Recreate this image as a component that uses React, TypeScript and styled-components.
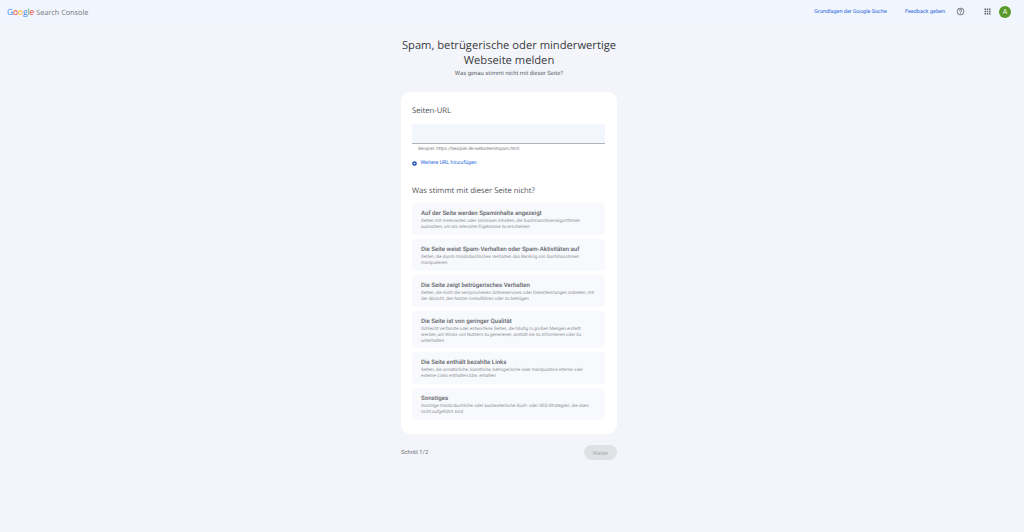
import styled, { createGlobalStyle } from "styled-components";

const GlobalStyle = createGlobalStyle`
  html, body {
    margin: 0;
    padding: 0;
    background: #f3f5fb;
    overflow: hidden;
  }
  * { box-sizing: border-box; }
`;

const Page = styled.div`
  width: 1024px;
  height: 532px;
  overflow: hidden;
  font-family: "Roboto", "Liberation Sans", sans-serif;
  text-rendering: geometricPrecision;
  background: #f3f5fb;
`;

const Header = styled.header`
  height: 23px;
  display: flex;
  align-items: center;
  padding: 0 13px 0 7px;
  background: #f1f5fd;
`;

const Logo = styled.div`
  display: flex;
  align-items: baseline;
  font-family: "Open Sans", sans-serif;
  font-size: 7.3px;
  color: #73777c;
  gap: 2px;
`;

const GoogleWord = styled.span`
  font-size: 8.6px;
  letter-spacing: -0.2px;
`;

const Letter = styled.span<{ $c: string }>`
  color: ${(p) => p.$c};
`;

const HeaderLinks = styled.nav`
  margin-left: auto;
  display: flex;
  align-items: center;
`;

const HeaderLink = styled.a<{ $gap: number }>`
  font-size: 5.5px;
  font-weight: 400;
  color: #2f6be0;
  margin-right: ${(p) => p.$gap}px;
  white-space: nowrap;
`;

const IconButton = styled.div<{ $gap: number }>`
  display: flex;
  margin-right: ${(p) => p.$gap}px;
`;

const Avatar = styled.div`
  width: 12px;
  height: 12px;
  border-radius: 50%;
  background: #5a9a2a;
  color: #fff;
  font-size: 7px;
  display: flex;
  align-items: center;
  justify-content: center;
`;

const Main = styled.main`
  width: 216px;
  margin-left: 401px;
  display: flex;
  flex-direction: column;
`;

const Title = styled.h1`
  margin: 15px -6px 0;
  font-family: "Open Sans", sans-serif;
  font-size: 11.2px;
  line-height: 15px;
  font-weight: 400;
  text-align: center;
  color: #3a3c40;
`;

const Subtitle = styled.p`
  margin: 2px 0 0;
  font-size: 5.9px;
  line-height: 8px;
  text-align: center;
  color: #5f6368;
`;

const Card = styled.section`
  margin-top: 14px;
  height: 342px;
  padding: 14px 12px 0 11px;
  background: #fff;
  border-radius: 9px;
  display: flex;
  flex-direction: column;
`;

const SectionTitle = styled.h2<{ $top?: number }>`
  margin: ${(p) => p.$top ?? 0}px 0 0;
  font-family: "Open Sans", sans-serif;
  font-size: 7.7px;
  line-height: 10px;
  font-weight: 400;
  color: #505357;
`;

const UrlField = styled.div`
  margin-top: 8px;
  height: 20px;
  background: #f3f6fd;
  border-bottom: 1px solid #b0b4ba;
`;

const Hint = styled.div`
  margin: 3px 0 0 6px;
  font-size: 4.6px;
  line-height: 6px;
  color: #80848a;
`;

const AddLink = styled.a`
  margin-top: 7px;
  display: flex;
  align-items: center;
  gap: 3.5px;
  font-size: 5.3px;
  line-height: 7px;
  font-weight: 400;
  color: #2f6be0;
`;

const AddIconSvg = styled.svg`
  width: 5px;
  height: 5px;
  margin-top: -1px;
`;

const Options = styled.div`
  margin-top: 7px;
  display: flex;
  flex-direction: column;
  gap: 4px;
`;

const Option = styled.div`
  padding: 7px 8px 3px 9px;
  min-height: 32px;
  background: #f8f9fd;
  border-radius: 4px;
`;

const OptionTitle = styled.div`
  font-size: 6.1px;
  line-height: 7px;
  font-weight: 500;
  color: #5f6368;
`;

const OptionText = styled.div`
  margin-top: 2px;
  font-size: 4.55px;
  line-height: 6px;
  color: #8f9398;
`;

const Footer = styled.div`
  margin-top: 11px;
  display: flex;
  align-items: center;
  justify-content: space-between;
`;

const Step = styled.span`
  font-size: 5.8px;
  font-weight: 400;
  color: #6b6f74;
`;

const NextButton = styled.button`
  width: 33px;
  height: 15px;
  padding: 0;
  border: none;
  border-radius: 8px;
  background: #dfe1e5;
  color: #a9acb1;
  font-family: inherit;
  font-size: 5.6px;
  font-weight: 400;
`;

const options = [
  {
    title: "Auf der Seite werden Spaminhalte angezeigt",
    text: "Seiten mit irrelevanten oder sinnlosen Inhalten, die Suchmaschinenalgorithmen ausnutzen, um als relevante Ergebnisse zu erscheinen",
  },
  {
    title: "Die Seite weist Spam-Verhalten oder Spam-Aktivitäten auf",
    text: "Seiten, die durch missbräuchliches Verhalten das Ranking von Suchmaschinen manipulieren",
  },
  {
    title: "Die Seite zeigt betrügerisches Verhalten",
    text: "Seiten, die nicht die versprochenen Onlineservices oder Dienstleistungen anbieten, mit der Absicht, den Nutzer irrezuführen oder zu betrügen",
  },
  {
    title: "Die Seite ist von geringer Qualität",
    text: "Schlecht verfasste oder entworfene Seiten, die häufig in großen Mengen erstellt werden, um Klicks von Nutzern zu generieren, anstatt sie zu informieren oder zu unterhalten",
  },
  {
    title: "Die Seite enthält bezahlte Links",
    text: "Seiten, die unnatürliche, künstliche, betrügerische oder manipulative interne oder externe Links enthalten bzw. erhalten",
  },
  {
    title: "Sonstiges",
    text: "Sonstige missbräuchliche oder ausbeuterische Such- oder SEO-Strategien, die oben nicht aufgeführt sind",
  },
];

const HelpIcon = () => (
  <svg width="9" height="9" viewBox="0 0 24 24" fill="#5f6368">
    <path d="M11 18h2v-2h-2v2zm1-16C6.48 2 2 6.48 2 12s4.48 10 10 10 10-4.48 10-10S17.52 2 12 2zm0 18c-4.41 0-8-3.59-8-8s3.59-8 8-8 8 3.59 8 8-3.59 8-8 8zm0-14c-2.21 0-4 1.79-4 4h2c0-1.1.9-2 2-2s2 .9 2 2c0 2-3 1.75-3 5h2c0-2.25 3-2.5 3-5 0-2.21-1.79-4-4-4z" />
  </svg>
);

const AppsIcon = () => (
  <svg width="9" height="9" viewBox="0 0 24 24" fill="#5f6368">
    <path d="M4 8h4V4H4v4zm6 12h4v-4h-4v4zm-6 0h4v-4H4v4zm0-6h4v-4H4v4zm6 0h4v-4h-4v4zm6-10v4h4V4h-4zm-6 4h4V4h-4v4zm6 6h4v-4h-4v4zm0 6h4v-4h-4v4z" />
  </svg>
);

const AddIcon = () => (
  <AddIconSvg viewBox="0 0 24 24">
    <circle cx="12" cy="12" r="11" fill="#1a47b8" />
    <path d="M11 6h2v5h5v2h-5v5h-2v-5H6v-2h5z" fill="#fff" />
  </AddIconSvg>
);

export default function App() {
  return (
    <Page>
      <GlobalStyle />
      <Header>
        <Logo>
          <GoogleWord>
            <Letter $c="#4285f4">G</Letter>
            <Letter $c="#ea4335">o</Letter>
            <Letter $c="#fbbc05">o</Letter>
            <Letter $c="#4285f4">g</Letter>
            <Letter $c="#34a853">l</Letter>
            <Letter $c="#ea4335">e</Letter>
          </GoogleWord>
          <span>Search Console</span>
        </Logo>
        <HeaderLinks>
          <HeaderLink $gap={18}>Grundlagen der Google Suche</HeaderLink>
          <HeaderLink $gap={11}>Feedback geben</HeaderLink>
          <IconButton $gap={18}>
            <HelpIcon />
          </IconButton>
          <IconButton $gap={7}>
            <AppsIcon />
          </IconButton>
          <Avatar>A</Avatar>
        </HeaderLinks>
      </Header>
      <Main>
        <Title>
          Spam, betrügerische oder minderwertige
          <br />
          Webseite melden
        </Title>
        <Subtitle>Was genau stimmt nicht mit dieser Seite?</Subtitle>
        <Card>
          <SectionTitle>Seiten-URL</SectionTitle>
          <UrlField />
          <Hint>Beispiel: https://beispiel.de/websitemitspam.html</Hint>
          <AddLink>
            <AddIcon />
            Weitere URL hinzufügen
          </AddLink>
          <SectionTitle $top={19}>Was stimmt mit dieser Seite nicht?</SectionTitle>
          <Options>
            {options.map((o) => (
              <Option key={o.title}>
                <OptionTitle>{o.title}</OptionTitle>
                <OptionText>{o.text}</OptionText>
              </Option>
            ))}
          </Options>
        </Card>
        <Footer>
          <Step>Schritt 1/2</Step>
          <NextButton>Weiter</NextButton>
        </Footer>
      </Main>
    </Page>
  );
}
